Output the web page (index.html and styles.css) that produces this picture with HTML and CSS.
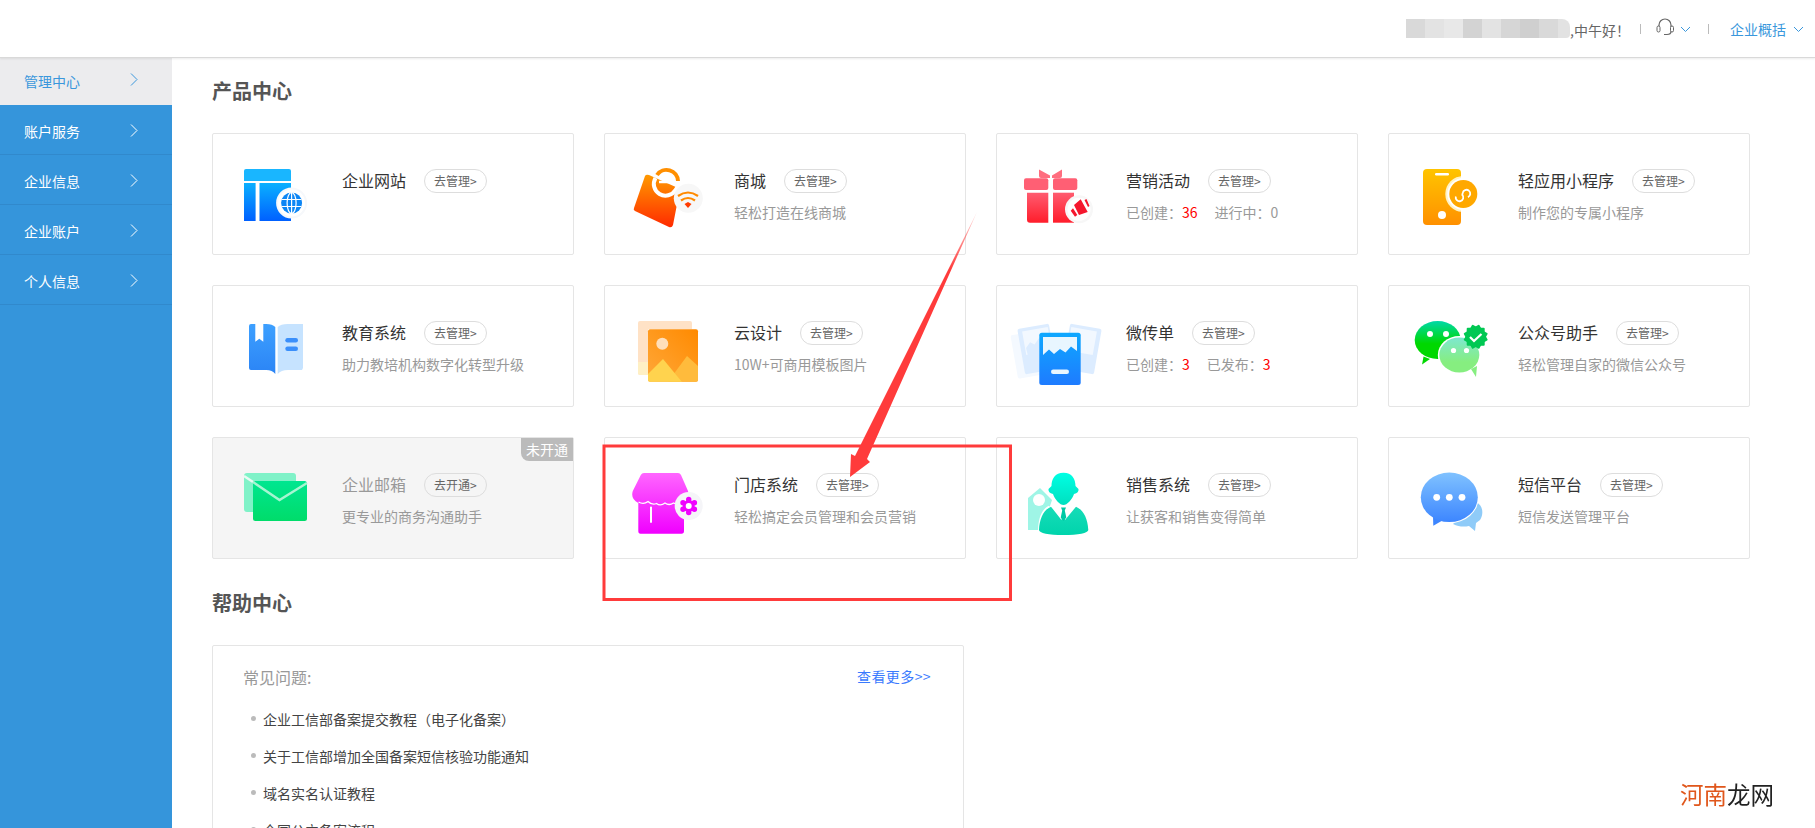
FILE: index.html
```html
<!DOCTYPE html>
<html lang="zh-CN">
<head>
<meta charset="utf-8">
<title>管理中心</title>
<link rel="stylesheet" href="styles.css">
</head>
<body>
<header class="topbar">
  <div class="mosaic"></div>
  <span class="greet">,中午好！</span>
  <i class="divider first-divider"></i>
  <svg class="headset" viewBox="0 0 20 18"><path d="M4 9V7a6 6 0 0 1 12 0v2M9 16.500h3q4 0 4-3V11" fill="none" stroke="#666" stroke-width="1.200"/><rect x="2" y="8" width="3" height="6" rx="1.500" fill="#fff" stroke="#666"/><rect x="15.500" y="8" width="3" height="6" rx="1.500" fill="#fff" stroke="#666"/></svg>
  <svg class="caret caret-a" viewBox="0 0 11 7"><path d="M1 1l4.500 4.500L10 1" fill="none" stroke="#3a97dc"/></svg>
  <i class="divider second-divider"></i>
  <a class="overview">企业概括</a>
  <svg class="caret caret-b" viewBox="0 0 11 7"><path d="M1 1l4.500 4.500L10 1" fill="none" stroke="#3a97dc"/></svg>
</header>
<div class="shell">
  <nav class="sidebar">
    <a class="nav-item active"><span>管理中心</span><svg class="chev" viewBox="0 0 8 13"><path d="M1 .5l6 6-6 6" fill="none" stroke="#3a97dc"/></svg></a>
    <a class="nav-item"><span>账户服务</span><svg class="chev" viewBox="0 0 8 13"><path d="M1 .5l6 6-6 6" fill="none" stroke="#fff"/></svg></a>
    <a class="nav-item"><span>企业信息</span><svg class="chev" viewBox="0 0 8 13"><path d="M1 .5l6 6-6 6" fill="none" stroke="#fff"/></svg></a>
    <a class="nav-item"><span>企业账户</span><svg class="chev" viewBox="0 0 8 13"><path d="M1 .5l6 6-6 6" fill="none" stroke="#fff"/></svg></a>
    <a class="nav-item"><span>个人信息</span><svg class="chev" viewBox="0 0 8 13"><path d="M1 .5l6 6-6 6" fill="none" stroke="#fff"/></svg></a>
  </nav>
  <main class="content">
    <h2 class="section-title">产品中心</h2>
    <section class="grid">

      <article class="card">
        <svg class="icon" viewBox="0 0 80 64">
          <defs><linearGradient id="g1" x1="0" y1="0" x2="0" y2="1"><stop offset="0" stop-color="#0ab0ff"/><stop offset="1" stop-color="#0060ff"/></linearGradient></defs>
          <path d="M4 4h43a2 2 0 0 1 2 2v10H2V6a2 2 0 0 1 2-2z" fill="#19b6ff"/>
          <rect x="2" y="18" width="11.600" height="38" fill="url(#g1)"/>
          <rect x="17.500" y="18" width="31.500" height="38" fill="url(#g1)"/>
          <circle cx="49.600" cy="38" r="15.500" fill="#f6f8fb"/><circle cx="49.600" cy="38" r="13.500" fill="#fff"/>
          <circle cx="49.600" cy="38" r="10.500" fill="#0d86f5"/>
          <g fill="none" stroke="#fff" stroke-width="1.200"><ellipse cx="49.600" cy="38" rx="4.500" ry="10.500"/><path d="M49.600 27.500v21M39.500 34.500h20M39.500 41.500h20"/></g>
        </svg>
        <div class="body">
          <div class="head"><span class="name">企业网站</span><a class="pill">去管理&gt;</a></div>
        </div>
      </article>

      <article class="card">
        <svg class="icon" viewBox="0 0 80 64">
          <defs><linearGradient id="g2" x1="0" y1="0" x2="0" y2="1"><stop offset="0" stop-color="#ff9a00"/><stop offset="1" stop-color="#ff2a00"/></linearGradient></defs>
          <path d="M11 11q1-2 4-1l29 13q2 1 1.500 3.500L39 60q-1 3-4 2L1 46q-2-1-1-3z" fill="url(#g2)"/>
          <path d="M23 10a11.500 11.500 0 0 1 21 6" fill="none" stroke="#ff8f00" stroke-width="4"/>
          <path d="M21.500 13a11.500 11.500 0 0 0 20 12l2-3" fill="none" stroke="#fff" stroke-width="4"/>
          <path d="M25 17h17" stroke="#fff" stroke-width="2.500"/>
          <circle cx="54.300" cy="33.300" r="14.500" fill="#f7f7f7"/>
          <g fill="none" stroke="#ff8a00" stroke-width="2.200"><path d="M44 31q10-7 20 0"/><path d="M47 35.500q7-5 14 0"/></g>
          <path d="M50.500 39l3.500-2 3.500 2-3.500 4z" fill="#ff3b00"/>
        </svg>
        <div class="body">
          <div class="head"><span class="name">商城</span><a class="pill">去管理&gt;</a></div>
          <p class="desc">轻松打造在线商城</p>
        </div>
      </article>

      <article class="card">
        <svg class="icon" viewBox="0 0 80 64">
          <defs><linearGradient id="g3" x1="0" y1="0" x2="0" y2="1"><stop offset="0" stop-color="#ff5c70"/><stop offset="1" stop-color="#ff1d2b"/></linearGradient></defs>
          <path d="M13 4.500l11 6v2.500H15q-2 0-2-2zM36 4.500l-10 6v2.500h8q2 0 2-2z" fill="#ff6d7e"/>
          <rect x="-2" y="13.300" width="24.300" height="11.700" rx="2" fill="#ff5f74"/>
          <rect x="27" y="13.300" width="24.300" height="11.700" rx="2" fill="#ff5f74"/>
          <path d="M1 27.700h21.300v30H4a3 3 0 0 1-3-3z" fill="url(#g3)"/>
          <path d="M27 27.700h21v30H27z" fill="url(#g3)"/>
          <circle cx="53" cy="44.300" r="14" fill="#f7f7f7"/><circle cx="53" cy="44.300" r="11.500" fill="#fff"/>
          <path d="M48 40l6.700-5.700 7 12.700-8.700 3zM44.700 45.700l2.300-2.400 4.300 6.700-2.300 1.700zM58.500 35l2-1 3 7-1.500 1z" fill="#f5172e"/>
        </svg>
        <div class="body">
          <div class="head"><span class="name">营销活动</span><a class="pill">去管理&gt;</a></div>
          <p class="desc"><span>已创建：<b class="num">36</b></span><span class="second">进行中：0</span></p>
        </div>
      </article>

      <article class="card">
        <svg class="icon" viewBox="0 0 80 64">
          <defs><linearGradient id="g4" x1="0" y1="0" x2="0" y2="1"><stop offset="0" stop-color="#ffc400"/><stop offset="1" stop-color="#ff9000"/></linearGradient></defs>
          <rect x="5" y="4" width="38" height="56" rx="4" fill="url(#g4)"/>
          <rect x="17" y="8" width="14" height="2.400" rx="1.200" fill="#fff"/>
          <circle cx="24" cy="50" r="4" fill="#fff"/>
          <clipPath id="c4"><rect x="5" y="4" width="38" height="56"/></clipPath>
          <circle cx="45.300" cy="29" r="18" fill="#fff3c4" clip-path="url(#c4)"/>
          <circle cx="45.300" cy="29" r="16" fill="#fff"/>
          <circle cx="45.300" cy="29" r="14" fill="#ffa800"/>
          <path d="M38.500 33a3.800 3.800 0 1 0 6-3v-2a3.800 3.800 0 1 1 6 3" transform="rotate(12 45 29)" fill="none" stroke="#fff" stroke-width="1.800"/>
        </svg>
        <div class="body">
          <div class="head"><span class="name">轻应用小程序</span><a class="pill">去管理&gt;</a></div>
          <p class="desc">制作您的专属小程序</p>
        </div>
      </article>

      <article class="card">
        <svg class="icon" viewBox="0 0 80 64">
          <defs><linearGradient id="g5" x1="0" y1="0" x2="0" y2="1"><stop offset="0" stop-color="#3da0ff"/><stop offset="1" stop-color="#2b84f5"/></linearGradient></defs>
          <path d="M9 7h4.300v17.700l4-3 4 3V7h3q6 0 9 3v47q-3-4-9-4H9q-2 0-2-2V9q0-2 2-2z" fill="url(#g5)"/>
          <path d="M35.700 10q3-3 10-3H61v44l-1 2H46q-7 0-10.300 4z" fill="#c6e3ff"/>
          <rect x="43.300" y="21" width="12.700" height="4.400" rx="2.200" fill="#3a8ffb"/>
          <rect x="43.300" y="29.500" width="12.700" height="4.400" rx="2.200" fill="#3a8ffb"/>
        </svg>
        <div class="body">
          <div class="head"><span class="name">教育系统</span><a class="pill">去管理&gt;</a></div>
          <p class="desc">助力教培机构数字化转型升级</p>
        </div>
      </article>

      <article class="card">
        <svg class="icon" viewBox="0 0 80 64">
          <defs>
            <linearGradient id="g6" x1="1" y1="0" x2="0" y2="1"><stop offset="0" stop-color="#ff8a00"/><stop offset="1" stop-color="#ffa83a"/></linearGradient>
            <clipPath id="c6"><rect x="14" y="12.300" width="50" height="52.400" rx="2"/></clipPath>
          </defs>
          <path d="M6 4h50a2 2 0 0 1 2 2v6H14v46H6a2 2 0 0 1-2-2V6a2 2 0 0 1 2-2z" fill="#ffe2c6"/>
          <path d="M4 45h10v13H6a2 2 0 0 1-2-2z" fill="#fff0c4"/>
          <rect x="14" y="12.300" width="50" height="52.400" rx="2" fill="url(#g6)"/>
          <circle cx="28.300" cy="26.700" r="6" fill="#ffdfba"/>
          <g clip-path="url(#c6)">
            <path d="M34 64.700L53 39l11 10v16z" fill="#ffbb3c"/>
            <path d="M14 57l15-15 19 23H14z" fill="#ffd34e"/>
          </g>
        </svg>
        <div class="body">
          <div class="head"><span class="name">云设计</span><a class="pill">去管理&gt;</a></div>
          <p class="desc">10W+可商用模板图片</p>
        </div>
      </article>

      <article class="card">
        <svg class="icon" viewBox="0 0 80 64">
          <defs><linearGradient id="g7" x1="0" y1="0" x2="0" y2="1"><stop offset="0" stop-color="#0ea8ff"/><stop offset="1" stop-color="#1e7bff"/></linearGradient></defs>
          <rect x="-12" y="15" width="36" height="44" rx="2" transform="rotate(-10 6 37)" fill="#f4f9ff"/>
          <rect x="-5" y="9" width="32" height="46" rx="2" transform="rotate(-10 11 32)" fill="#dcecff"/>
          <rect x="-2" y="12" width="26" height="24" transform="rotate(-10 11 24)" fill="#f2f8ff"/>
          <path d="M-1 29l5-5 4 3 6-6 3 3v20H0z" fill="#dcecff" transform="rotate(-10 11 24)"/>
          <rect x="40" y="9" width="32" height="46" rx="2" transform="rotate(10 56 32)" fill="#dcecff"/>
          <rect x="43" y="12" width="26" height="24" transform="rotate(10 56 24)" fill="#f2f8ff"/>
          <rect x="13.300" y="15.700" width="41.400" height="52.300" rx="2.500" fill="url(#g7)"/>
          <path d="M17 20h34v14l-6-4.500-5.500 6-5.500-3.500-6 5-5-4.500-6 5.500z" fill="#e8f6ff"/>
          <rect x="25" y="52.500" width="18" height="4.400" rx="2.200" fill="#e8f6ff"/>
        </svg>
        <div class="body">
          <div class="head"><span class="name">微传单</span><a class="pill">去管理&gt;</a></div>
          <p class="desc"><span>已创建：<b class="num">3</b></span><span class="second">已发布：<b class="num">3</b></span></p>
        </div>
      </article>

      <article class="card">
        <svg class="icon" viewBox="0 0 80 64">
          <defs>
            <linearGradient id="g8a" x1="0" y1="0" x2="0" y2="1"><stop offset="0" stop-color="#00d8a8"/><stop offset=".6" stop-color="#00d800"/></linearGradient>
            <linearGradient id="g8b" x1="0" y1="0" x2="0" y2="1"><stop offset="0" stop-color="#7de8d0"/><stop offset=".7" stop-color="#86ee80"/></linearGradient>
          </defs>
          <path d="M4 47.500l1.500-8L12 42z" fill="#00d800"/>
          <ellipse cx="19.700" cy="23" rx="23" ry="19" fill="url(#g8a)"/>
          <circle cx="12" cy="17" r="3" fill="#fff"/><circle cx="28" cy="17" r="3" fill="#fff"/>
          <ellipse cx="41.300" cy="38" rx="21.500" ry="19" fill="#fff"/>
          <path d="M53 52l5 8 1-11z" fill="#86ee80"/>
          <ellipse cx="41.300" cy="38" rx="20" ry="17.500" fill="url(#g8b)"/>
          <circle cx="35.500" cy="33.500" r="2.600" fill="#fff"/><circle cx="48.500" cy="33.500" r="2.600" fill="#fff"/>
          <g fill="#00c853"><rect x="48.700" y="10.700" width="18" height="18" rx="1"/><rect x="48.700" y="10.700" width="18" height="18" rx="1" transform="rotate(30 57.700 19.700)"/><rect x="48.700" y="10.700" width="18" height="18" rx="1" transform="rotate(60 57.700 19.700)"/></g>
          <path d="M52 20l4 4 7.500-7" fill="none" stroke="#fff" stroke-width="2.200"/>
        </svg>
        <div class="body">
          <div class="head"><span class="name">公众号助手</span><a class="pill">去管理&gt;</a></div>
          <p class="desc">轻松管理自家的微信公众号</p>
        </div>
      </article>

      <article class="card off">
        <span class="flag">未开通</span>
        <svg class="icon" viewBox="0 0 80 64">
          <defs><linearGradient id="g9" x1="0" y1="0" x2="0" y2="1"><stop offset="0" stop-color="#00e690"/><stop offset="1" stop-color="#00dc6a"/></linearGradient></defs>
          <rect x="2" y="4" width="52" height="39" rx="3" fill="#80f2c8"/>
          <rect x="11" y="12" width="54" height="40" rx="2.500" fill="url(#g9)"/>
          <path d="M2 7l9 6" stroke="#e8fbf3" stroke-width="2.400"/>
          <path d="M11 13l26.500 18L65 14" fill="none" stroke="#a6f5d2" stroke-width="2.400"/>
        </svg>
        <div class="body">
          <div class="head"><span class="name">企业邮箱</span><a class="pill">去开通&gt;</a></div>
          <p class="desc">更专业的商务沟通助手</p>
        </div>
      </article>

      <article class="card">
        <svg class="icon" viewBox="0 0 80 64">
          <defs><linearGradient id="g10" x1="0" y1="0" x2="0" y2="1"><stop offset="0" stop-color="#ff66ff"/><stop offset="1" stop-color="#f000ff"/></linearGradient></defs>
          <path d="M10 4h34q2 0 3 2l7 16q2 8-4 12v28q0 2.700-2.500 2.700H6.500Q4.300 64.700 4.300 62V34q-8-4-5.500-12l8-16q1-2 3.200-2z" fill="url(#g10)"/>
          <path d="M4.500 33q5 3 9.500-.5 4 4 8.500 2 4 3 8.500-.5 4 3 8.500 0 4 2 8.500-.5" fill="none" stroke="#fff" stroke-width="1.300"/>
          <rect x="16" y="37.700" width="2" height="16" fill="#fff"/>
          <circle cx="54.700" cy="37" r="14" fill="#f5f5f8"/>
          <g fill="#f000ff"><circle cx="54.700" cy="37" r="6"/><circle cx="54.700" cy="30.500" r="2.700"/><circle cx="54.700" cy="43.500" r="2.700"/><circle cx="49" cy="33.800" r="2.700"/><circle cx="60.400" cy="33.800" r="2.700"/><circle cx="49" cy="40.200" r="2.700"/><circle cx="60.400" cy="40.200" r="2.700"/></g>
          <circle cx="54.700" cy="37" r="3" fill="#fff"/>
        </svg>
        <div class="body">
          <div class="head"><span class="name">门店系统</span><a class="pill">去管理&gt;</a></div>
          <p class="desc">轻松搞定会员管理和会员营销</p>
        </div>
      </article>

      <article class="card">
        <svg class="icon" viewBox="0 0 80 64">
          <defs>
            <linearGradient id="g11a" x1="0" y1="0" x2="0" y2="1"><stop offset="0" stop-color="#00ffe4"/><stop offset="1" stop-color="#00e0bf"/></linearGradient>
            <linearGradient id="g11b" x1="0" y1="0" x2="0" y2="1"><stop offset="0" stop-color="#16dcb8"/><stop offset="1" stop-color="#00d4ac"/></linearGradient>
          </defs>
          <path d="M2 29l12-10 12 12-10 30H2z" fill="#9ff5e6"/>
          <circle cx="13" cy="31" r="6" fill="#fff"/>
          <path d="M37.500 3.700C46 3.700 49.500 10 49.500 17l3 3q.5 4-4.500 5C46 31 41 36 37.500 36S29 31 27 25q-5-1-4.500-5l3-3C25.500 10 29 3.700 37.500 3.700z" fill="url(#g11a)"/>
          <path d="M23 36.700L36 52l1.500-4 1.500 4 13-15.300c7 3 10.500 11 10.800 24.300 0 3-10 5-25 5S12 64 12 61c.5-13 4-21 11-24.300z" fill="#fff"/>
          <path d="M25 37.700L35.500 51 37 42l2 9 11-13.300c7 3 11.700 11 12.300 23.300 0 3-10 5-24.800 5S13 64 13 61c.5-12 5-20.500 12-23.300z" fill="url(#g11b)"/>
          <path d="M35 38.500h5l-1.200 3 1.500 7-2.800 3.500-2.800-3.500 1.500-7z" fill="#00c9a4"/>
        </svg>
        <div class="body">
          <div class="head"><span class="name">销售系统</span><a class="pill">去管理&gt;</a></div>
          <p class="desc">让获客和销售变得简单</p>
        </div>
      </article>

      <article class="card">
        <svg class="icon" viewBox="0 0 80 64">
          <defs><linearGradient id="g12" x1="0" y1="0" x2="0" y2="1"><stop offset="0" stop-color="#80c2ff"/><stop offset="1" stop-color="#3d86ff"/></linearGradient></defs>
          <path d="M58 33c7 3 8 12 4 18l-4 3-1 8-6-5c-5 1-10 1-16-2z" fill="#8fcbf8"/>
          <ellipse cx="31.300" cy="28.300" rx="29.500" ry="26" fill="#fff"/>
          <path d="M15 47l.3 9.700 10-5.700z" fill="#3d86ff"/>
          <ellipse cx="31.300" cy="28.300" rx="28.500" ry="24.800" fill="url(#g12)"/>
          <circle cx="18.700" cy="28.300" r="3.400" fill="#fff"/><circle cx="31.300" cy="28.300" r="3.400" fill="#fff"/><circle cx="44" cy="28.300" r="3.400" fill="#fff"/>
        </svg>
        <div class="body">
          <div class="head"><span class="name">短信平台</span><a class="pill">去管理&gt;</a></div>
          <p class="desc">短信发送管理平台</p>
        </div>
      </article>
    </section>

    <h2 class="section-title help-title">帮助中心</h2>
    <section class="help">
      <div class="help-head"><span class="help-label">常见问题:</span><a class="more">查看更多&gt;&gt;</a></div>
      <ul class="faq">
        <li>企业工信部备案提交教程（电子化备案）</li>
        <li>关于工信部增加全国备案短信核验功能通知</li>
        <li>域名实名认证教程</li>
        <li>全国公立备案流程</li>
      </ul>
    </section>
  </main>
</div>

<svg class="annotation" viewBox="0 0 1815 828">
  <rect x="604" y="446" width="406.500" height="153.500" fill="none" stroke="#ff3b3b" stroke-width="3"/>
  <defs><linearGradient id="arrowfade" gradientUnits="userSpaceOnUse" x1="977" y1="212" x2="950" y2="270"><stop offset="0" stop-color="#ff3b3b" stop-opacity=".2"/><stop offset="1" stop-color="#ff3b3b"/></linearGradient></defs>
  <polygon points="977,212 867,459 870,462 850,477 851,454 855,456" fill="url(#arrowfade)"/>
</svg>
<div class="watermark"><span class="wm-a">河南</span>龙网</div>
</body>
</html>
```

FILE: styles.css
```css
* { box-sizing: border-box; }
html, body { margin: 0; height: 100%; overflow: hidden; }
body {
  background: #fff;
  font-family: "Noto Sans CJK SC", "Liberation Sans", sans-serif;
  font-size: 14px;
  color: #333;
  display: flex;
  flex-direction: column;
  text-spacing-trim: space-all;
  font-feature-settings: "chws" 0;
}
a { text-decoration: none; }

.topbar {
  flex: none;
  height: 58px;
  display: flex;
  align-items: center;
  border-bottom: 1px solid #d9d9d9;
  box-shadow: 0 1px 2px rgba(0,0,0,.08);
  padding: 0 11px 0 0;
  justify-content: flex-end;
  position: relative;
  z-index: 2;
  background: #fff;
}
.mosaic {
  width: 164px;
  height: 19px;
  border-radius: 0 8px 4px 0;
  background: linear-gradient(90deg,
    #d9d9d9 0 19px, #e3e3e3 19px 38px, #e8e8e8 38px 57px, #d3d3d3 57px 76px,
    #e3e3e3 76px 95px, #d6d6d6 95px 114px, #cfcfcf 114px 133px, #d9d9d9 133px 152px, #e2e2e2 152px 164px);
}
.greet { color: #666; line-height: 20px; margin-top: 3px; width: 58px; white-space: nowrap; }
.divider { display: block; width: 1px; height: 10px; background: #bbb; }
.first-divider { margin-left: 12px; }
.second-divider { margin-left: 17px; }
.headset { width: 20px; height: 18px; margin-left: 14px; margin-top: -3px; }
.caret { width: 11px; height: 7px; margin-top: 1px; }
.caret-a { margin-left: 5px; }
.overview { color: #3a97dc; margin-left: 21px; line-height: 20px; margin-top: 1px; }
.caret-b { margin-left: 7px; }

.shell { flex: 1; display: flex; min-height: 0; }
.sidebar { flex: none; width: 172px; background: #3595db; }
.nav-item {
  height: 50px;
  padding: 3px 0 0 24px;
  display: flex;
  align-items: center;
  color: #fff;
  border-bottom: 1px solid #3189cc;
}
.nav-item.active {
  height: 47px;
  padding: 0 0 2px 24px;
  background: #ececee;
  color: #3a97dc;
  border-bottom: 0;
}
.nav-item span { width: 56px; line-height: 20px; }
.chev { width: 8px; height: 13px; margin-left: 50px; margin-top: -2px; }

.content { flex: 1; padding: 19px 0 0 40px; min-width: 0; }
.section-title {
  margin: 0 0 28px;
  font-size: 20px;
  line-height: 28px;
  font-weight: 700;
  color: #555;
}
.help-title { margin-top: 30px; }

.grid { display: grid; grid-template-columns: repeat(4, 362px); gap: 30px; }
.card {
  position: relative;
  height: 122px;
  padding: 31px 0 0 29px;
  display: flex;
  border: 1px solid #e5e5e5;
  border-radius: 2px;
  background: #fff;
}
.card.off { background: #f5f5f5; }
.icon { flex: none; width: 80px; height: 64px; overflow: visible; margin-right: 20px; }
.body { padding-top: 4px; }
.head { display: flex; align-items: center; height: 24px; }
.name { font-size: 16px; line-height: 24px; color: #333; margin-top: -2px; }
.off .name { color: #999; }
.pill {
  margin-left: 18px;
  height: 24px;
  padding: 0 9px;
  border: 1px solid #ddd;
  border-radius: 12px;
  font-size: 12px;
  line-height: 22px;
  color: #666;
  white-space: nowrap;
}
.desc { margin: 9px 0 0; line-height: 20px; color: #999; white-space: nowrap; }
.second { margin-left: 17px; }
.num { color: #f00; font-weight: 400; }
.flag {
  position: absolute;
  top: 0; right: 0;
  width: 52px; height: 23px;
  background: #bbb;
  color: #fff;
  font-size: 14px;
  line-height: 23px;
  text-align: center;
  border-radius: 0 0 0 8px;
}

.help {
  width: 752px;
  padding: 19px 32px 0 30px;
  border: 1px solid #e5e5e5;
  border-radius: 2px;
}
.help-head { display: flex; justify-content: space-between; align-items: center; height: 24px; }
.help-label { font-size: 16px; color: #999; }
.more { color: #3a7afe; margin-top: -2px; letter-spacing: .4px; }
.faq { list-style: none; margin: 11px 0 0; padding: 0 0 0 8px; }
.faq li {
  height: 37px;
  display: flex;
  align-items: center;
  gap: 7px;
  color: #444;
}
.faq li::before {
  content: "";
  width: 5px; height: 5px;
  border-radius: 50%;
  background: #bbb;
}

.annotation { position: fixed; left: 0; top: 0; width: 1815px; height: 828px; pointer-events: none; z-index: 5; }
.watermark {
  position: fixed;
  left: 1680px;
  top: 778px;
  font-size: 23.500px;
  line-height: 32px;
  color: #222;
  white-space: nowrap;
  z-index: 6;
}
.wm-a { color: #e0571c; }
```
